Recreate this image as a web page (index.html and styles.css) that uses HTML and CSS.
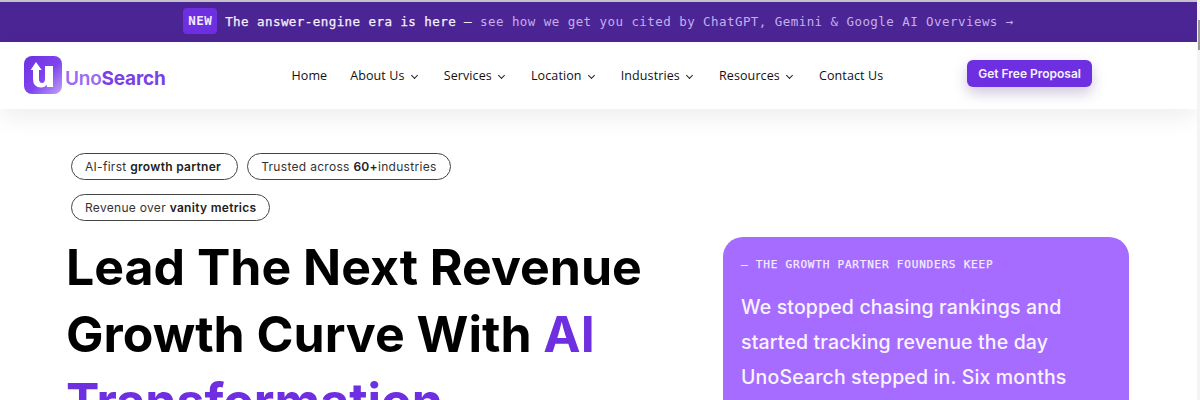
FILE: index.html
```html
<!DOCTYPE html>
<html lang="en">
<head>
  <meta charset="UTF-8" />
  <title>UnoSearch</title>
  <meta name="viewport" content="width=device-width, initial-scale=1" />
  <link rel="stylesheet" href="styles.css">
</head>
<body>

  <div class="page">
    <!-- Announcement bar -->
    <div class="promo">
      <span class="promo-tag">NEW</span>
      <span class="promo-text"><b>The answer-engine era is here —</b> see how we get you cited by ChatGPT, Gemini &amp; Google AI Overviews →</span>
    </div>

    <!-- Header -->
    <header class="site-header">
      <a class="logo" href="#">
        <svg class="logo-mark" viewBox="0 0 38 38" width="38" height="38" aria-hidden="true">
          <defs>
            <linearGradient id="markFill" x1="0" y1="0" x2="1" y2="1">
              <stop offset="0" stop-color="#6d2fe0" />
              <stop offset="0.55" stop-color="#7f45ee" />
              <stop offset="1" stop-color="#c3a4f8" />
            </linearGradient>
          </defs>
          <rect width="38" height="38" rx="8" fill="url(#markFill)" />
          <path d="M6.7 14 L12 6 L17.7 14 L15 14 L15 23 Q15 27 18 27 Q21 27 21 23 L21 10 L29 10 L29 31 L23 31 L22.6 28.5 Q21 31.5 17 31.5 Q9 31.5 9 23 L9 14 Z" fill="#fff" />
        </svg>
        <span class="logo-text"><span class="logo-light">Uno</span>Search</span>
      </a>

      <nav class="main-nav">
        <a href="#">Home</a>
        <a href="#">About Us <i class="caret"></i></a>
        <a href="#">Services <i class="caret"></i></a>
        <a href="#">Location <i class="caret"></i></a>
        <a href="#">Industries <i class="caret"></i></a>
        <a href="#">Resources <i class="caret"></i></a>
        <a href="#">Contact Us</a>
      </nav>

      <a class="cta" href="#">Get Free Proposal</a>
    </header>

    <!-- Hero -->
    <main class="hero">
      <div class="hero-left">
        <div class="pills">
          <span class="pill pill-wide">AI-first <b>growth partner</b></span>
          <span class="pill">Trusted across <b>60+</b>industries</span>
          <span class="pill">Revenue over <b>vanity metrics</b></span>
        </div>
        <h1>Lead The Next Revenue Growth Curve With <em>AI Transformation</em></h1>
      </div>

      <aside class="quote-card">
        <div class="quote-label">— THE GROWTH PARTNER FOUNDERS KEEP</div>
        <p>We stopped chasing rankings and started tracking revenue the day UnoSearch stepped in. Six months</p>
      </aside>
    </main>
  </div>

  <!-- Scrollbar strip at the window edge -->
  <div class="scroll-strip"><span class="scroll-thumb"></span></div>

</body>
</html>
```

FILE: styles.css
```css
* {
  box-sizing: border-box;
}
html, body {
  height: 400px;
  overflow: hidden;
}
body {
  margin: 0;
  background: #fff;
  color: #0a0a0a;
  font-family: Inter, 'Noto Sans', sans-serif;
}
a {
  color: inherit;
  text-decoration: none;
}
.page {
  width: 1197px;
}

/* Announcement bar */
.promo {
  height: 42px;
  border-top: 2px solid #c4c0cc;
  padding-bottom: 2px;
  background: #4c2594;
  display: flex;
  align-items: center;
  justify-content: center;
  gap: 8px;
  font-family: 'DejaVu Sans Mono', monospace;
  font-size: 12.5px;
  letter-spacing: 0.44px;
  color: #c4aef0;
}
.promo-tag {
  background: #6d2fe0;
  color: #f1eaff;
  font-weight: bold;
  padding: 5px 5px;
  border-radius: 4px;
  line-height: 16px;
}
.promo-text b {
  color: #f4f0fb;
  font-weight: normal;
  -webkit-text-stroke: 0.25px #f4f0fb;
}

/* Header */
.site-header {
  height: 67px;
  display: flex;
  align-items: center;
  padding: 0 105px 0 24px;
  background: #fff;
  box-shadow: 0 8px 24px rgba(0, 0, 0, 0.07);
  position: relative;
}
.logo {
  display: flex;
  align-items: flex-end;
  gap: 3px;
  width: 267.5px;
  margin-top: -1px;
}
.logo-mark {
  display: block;
}
.logo-text {
  font-size: 19px;
  font-weight: 700;
  color: #7a3fe8;
  letter-spacing: -0.2px;
  line-height: 24px;
  margin-bottom: 3px;
}
.logo-light {
  color: #9a6cf0;
  font-weight: 600;
}
.main-nav {
  display: flex;
  align-items: center;
  gap: 23px;
  font-family: 'Open Sans', sans-serif;
  font-size: 12.5px;
  font-weight: 500;
  letter-spacing: 0.1px;
  color: #111;
}
.caret {
  display: inline-block;
  width: 5px;
  height: 5px;
  margin: 0 3.8px 2px 4px;
  border-right: 1.6px solid #222;
  border-bottom: 1.6px solid #222;
  transform: rotate(45deg);
}
.cta {
  margin-left: auto;
  margin-top: -5px;
  background: #6d2fe0;
  color: #f6f1ff;
  font-size: 12px;
  font-weight: 600;
  line-height: 27px;
  padding: 0 11px;
  border-radius: 6px;
  box-shadow: 0 6px 14px rgba(60, 30, 120, 0.25);
}

/* Hero */
.hero {
  display: flex;
  justify-content: space-between;
  padding: 44px 68px 0 66px;
}
.hero-left {
  width: 600px;
}
.pills {
  display: flex;
  flex-wrap: wrap;
  gap: 14px 9px;
  padding-left: 5px;
  width: 420px;
}
.pill {
  height: 27px;
  padding: 0 13px;
  border: 1px solid #444;
  border-radius: 14px;
  font-size: 12px;
  letter-spacing: 0.3px;
  line-height: 25px;
  color: #333;
}
.pill-wide {
  padding-right: 16px;
}
.pill b {
  font-weight: 600;
  color: #222;
}
h1 {
  margin: 13px 0 0;
  font-size: 50px;
  line-height: 67px;
  font-weight: 700;
  color: #000;
}
h1 em {
  font-style: normal;
  color: #6d2fe0;
}

/* Quote card */
.quote-card {
  width: 406px;
  height: 260px;
  margin-top: 84px;
  padding: 21px 40px 0 18px;
  background: #a66cff;
  border-radius: 20px;
  color: #fff;
}
.quote-label {
  font-family: 'DejaVu Sans Mono', monospace;
  font-size: 11px;
  letter-spacing: 0.8px;
  line-height: 14px;
  color: #f3ecff;
  -webkit-text-stroke: 0.25px #f3ecff;
}
.quote-card p {
  margin: 18px 0 0;
  font-size: 19.5px;
  letter-spacing: 0.15px;
  line-height: 35px;
  font-weight: 500;
  color: #f8f4ff;
}

/* Scrollbar strip */
.scroll-strip {
  position: fixed;
  top: 0;
  right: 0;
  width: 3px;
  height: 400px;
  background: #f4f4f4;
}
.scroll-thumb {
  display: block;
  position: absolute;
  top: 20px;
  right: 0;
  width: 2px;
  height: 30px;
  background: #9a9a9a;
}
```
